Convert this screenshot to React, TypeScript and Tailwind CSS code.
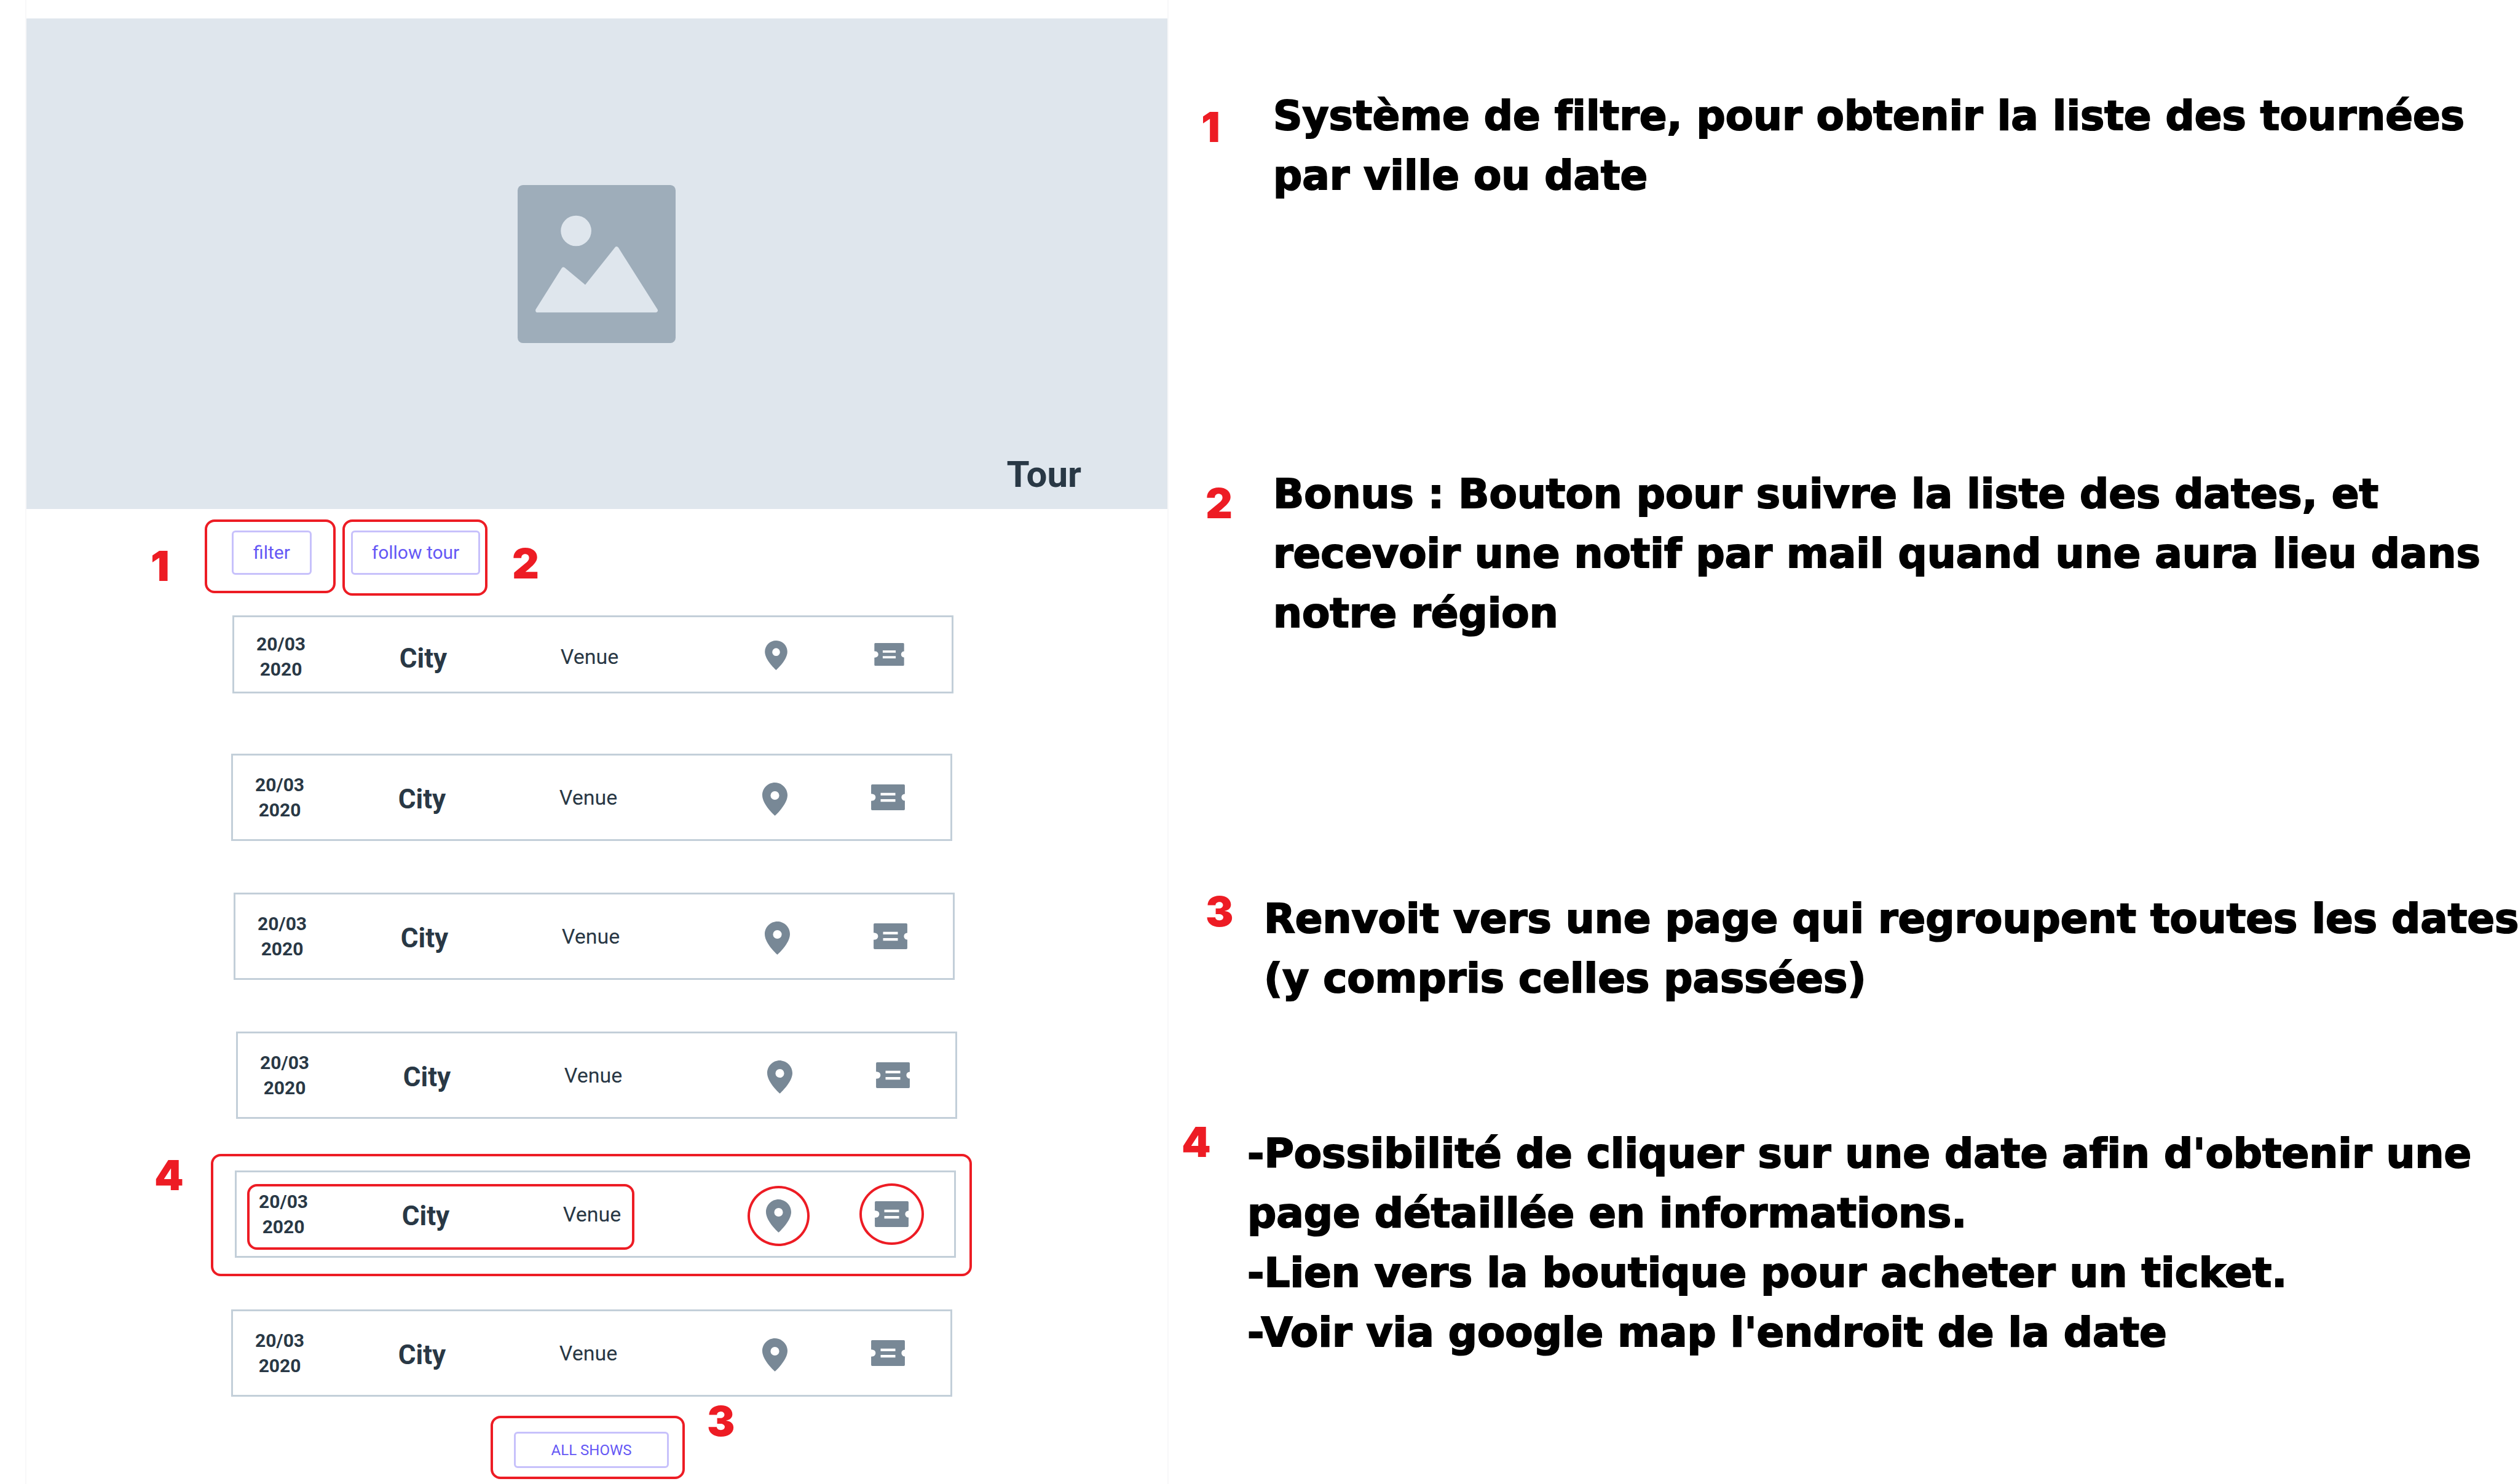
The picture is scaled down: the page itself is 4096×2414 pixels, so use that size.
import type { ReactNode } from "react";
import clsx from "clsx";

type Show = {
  id: number;
  day: string;
  year: string;
  city: string;
  venue: string;
  indent: string;
  compact?: boolean;
  annotated?: boolean;
};

const base = { day: "20/03", year: "2020", city: "City", venue: "Venue" };

const shows: Show[] = [
  { id: 1, ...base, indent: "ml-0.5", compact: true },
  { id: 2, ...base, indent: "ml-0" },
  { id: 3, ...base, indent: "ml-1" },
  { id: 4, ...base, indent: "ml-2" },
  { id: 5, ...base, indent: "ml-1.5", annotated: true },
  { id: 6, ...base, indent: "ml-0" },
];

function Marker({ children, className }: { children: ReactNode; className?: string }) {
  return (
    <span
      className={clsx(
        "block shrink-0 font-['Inter',sans-serif] text-[68px] leading-[68px] font-black text-[#ed1c24]",
        className,
      )}
    >
      {children}
    </span>
  );
}

function OutlineButton({ children, className }: { children: ReactNode; className?: string }) {
  return (
    <button
      type="button"
      className={clsx(
        "block cursor-pointer rounded-[6px] border-3 border-[#c7c1fb] bg-white text-center text-[#6558f5]",
        className,
      )}
    >
      {children}
    </button>
  );
}

function PictureIcon() {
  return (
    <svg viewBox="0 0 300 300" className="size-[257px]" aria-hidden="true">
      <rect width="300" height="300" rx="10" fill="#9eadba" />
      <circle cx="111" cy="87" r="29" fill="#dfe6ed" />
      <path
        d="M38 238 L87 160 L129 195 L188 121 L262 238 Z"
        fill="#dfe6ed"
        stroke="#dfe6ed"
        strokeWidth="8"
        strokeLinejoin="round"
      />
    </svg>
  );
}

function PinIcon({ className }: { className: string }) {
  return (
    <svg viewBox="0 0 48 63" className={className} aria-hidden="true">
      <path
        fillRule="evenodd"
        fill="#788896"
        d="M24 0C10.7 0 0 10.7 0 24c0 18 24 39 24 39s24-21 24-39C48 10.7 37.3 0 24 0Zm0 16.200a8.300 8.300 0 1 1 0 16.600a8.300 8.300 0 1 1 0-16.600Z"
      />
    </svg>
  );
}

function TicketIcon({ className }: { className: string }) {
  return (
    <svg viewBox="0 0 64 49" className={className} aria-hidden="true">
      <path
        fillRule="evenodd"
        fill="#788896"
        d="M2 0H62a2 2 0 0 1 2 2V18a6.500 6.500 0 0 0 0 13V47a2 2 0 0 1-2 2H2a2 2 0 0 1-2-2V31a2 2 0 0 0 2 0a6.500 6.500 0 0 0 0-13a2 2 0 0 0-2 0V2a2 2 0 0 1 2-2ZM18 16V21H46V16ZM18 28V33H46V28Z"
      />
    </svg>
  );
}

function ShowRow({ show }: { show: Show }) {
  const { compact, annotated } = show;
  return (
    <li className={clsx("relative w-[77%]", show.indent, compact && "mb-[14px]")}>
      <article
        className={clsx(
          "flex border-3 border-[#c3cfd9] bg-white",
          compact ? "h-[127px]" : "h-[142px]",
        )}
      >
        <a
          href="#details"
          className={clsx(
            "relative ml-[17px] grid w-[54%] grid-cols-[118fr_344fr_167fr] items-center text-center",
            compact && "pt-[6px]",
          )}
        >
          <time className="text-[30px] leading-[41px] font-bold">
            {show.day}
            <br />
            {show.year}
          </time>
          <h2 className="pt-[6px] text-[44px] leading-[52px] font-bold">{show.city}</h2>
          <p className="pl-[51px] text-left text-[34px] leading-[40px]">{show.venue}</p>
          {annotated && (
            <span className="absolute inset-x-0 top-[19px] bottom-[10px] rounded-2xl border-4 border-[#ed1c24]" />
          )}
        </a>
        <div className={clsx("ml-auto flex w-46 items-center justify-center", compact ? "pt-[3px]" : "pt-[6px]")}>
          <a href="#map" aria-label="Map" className="relative">
            <PinIcon className={compact ? "h-[48px] w-[37px]" : "h-[54px] w-[41px]"} />
            {annotated && (
              <span className="absolute -inset-x-[30px] -inset-y-[22px] rounded-[50%] border-4 border-[#ed1c24]" />
            )}
          </a>
        </div>
        <div className="mr-[9px] flex w-46 items-center justify-center">
          <a href="#tickets" aria-label="Tickets" className="relative">
            <TicketIcon className={compact ? "h-[37px] w-[49px]" : "h-[42px] w-[55px]"} />
            {annotated && (
              <span className="absolute -inset-x-[25px] -inset-y-[29px] rounded-[50%] border-4 border-[#ed1c24]" />
            )}
          </a>
        </div>
      </article>
      {annotated && (
        <>
          <span className="pointer-events-none absolute -top-[27px] -right-[26px] -bottom-[30px] -left-[39px] rounded-2xl border-4 border-[#ed1c24]" />
          <Marker className="absolute -top-[27px] -left-[131px]">4</Marker>
        </>
      )}
    </li>
  );
}

function Note({
  number,
  lines,
  className,
  markerClass,
  textClass,
}: {
  number: number;
  lines: string[];
  className: string;
  markerClass: string;
  textClass?: string;
}) {
  return (
    <li className={clsx("flex items-start", className)}>
      <Marker className={markerClass}>{number}</Marker>
      <p
        className={clsx(
          "font-['DejaVu_Sans',sans-serif] text-[66px] leading-[97px] font-bold whitespace-nowrap text-black [-webkit-text-stroke:2px_black] [font-variant-ligatures:none]",
          textClass,
        )}
      >
        {lines.map((line) => (
          <span key={line} className="block">
            {line}
          </span>
        ))}
      </p>
    </li>
  );
}

export default function App() {
  return (
    <main className="flex min-h-screen items-stretch overflow-hidden bg-white font-['Roboto',sans-serif] text-[#293845]">
      <section className="ml-[41px] w-[45.410%] shrink-0 border-x-2 border-[#f8f8f9] pt-[30px]">
        <header className="relative flex h-[798px] items-center justify-center bg-[#dfe6ed]">
          <PictureIcon />
          <h1 className="absolute right-[140px] bottom-[26px] text-[60px] leading-[60px] font-bold">Tour</h1>
        </header>

        <div className="flex items-start pt-[17px] pl-[202px]">
          <Marker className="mt-[41px] w-[88px]">1</Marker>
          <div className="rounded-2xl border-4 border-[#ed1c24] pt-[14px] pr-[35px] pb-[26px] pl-[40px]">
            <OutlineButton className="h-[72px] w-[130px] text-[30px] leading-[36px]">filter</OutlineButton>
          </div>
          <div className="ml-[11px] rounded-2xl border-4 border-[#ed1c24] pt-[14px] pr-[8px] pb-[30px] pl-[10px]">
            <OutlineButton className="h-[72px] w-[210px] text-[30px] leading-[36px]">follow tour</OutlineButton>
          </div>
          <Marker className="mt-[37px] ml-[40px]">2</Marker>
        </div>

        <ul className="mt-[32px] flex flex-col gap-[84px] pl-[333px]">
          {shows.map((show) => (
            <ShowRow key={show.id} show={show} />
          ))}
        </ul>

        <div className="flex items-start pl-[755px]">
          <div className="mt-[31px] rounded-2xl border-4 border-[#ed1c24] pt-[22px] pr-[22px] pb-[14px] pl-[34px]">
            <OutlineButton className="h-[59px] w-[252px] text-[24px] leading-[28px]">ALL SHOWS</OutlineButton>
          </div>
          <Marker className="mt-[5px] ml-[36px]">3</Marker>
        </div>
      </section>

      <ol className="flex min-w-0 flex-1 flex-col pt-[140px]">
        <Note
          number={1}
          className="ml-[53px]"
          markerClass="mt-[32px] w-[117px]"
          lines={["Système de filtre, pour obtenir la liste des tournées", "par ville ou date"]}
        />
        <Note
          number={2}
          className="mt-[421px] ml-[60px]"
          markerClass="mt-[29px] w-[110px]"
          lines={[
            "Bonus : Bouton pour suivre la liste des dates, et",
            "recevoir une notif par mail quand une aura lieu dans",
            "notre région",
          ]}
        />
        <Note
          number={3}
          className="mt-[400px] ml-[60px]"
          markerClass="mt-[2px] w-[95px]"
          lines={["Renvoit vers une page qui regroupent toutes les dates", "(y compris celles passées)"]}
        />
        <Note
          number={4}
          className="mt-[183px] ml-[21px]"
          markerClass="w-[107px]"
          textClass="mt-[5px]"
          lines={[
            "-Possibilité de cliquer sur une date afin d'obtenir une",
            "page détaillée en informations.",
            "-Lien vers la boutique pour acheter un ticket.",
            "-Voir via google map l'endroit de la date",
          ]}
        />
      </ol>
    </main>
  );
}
